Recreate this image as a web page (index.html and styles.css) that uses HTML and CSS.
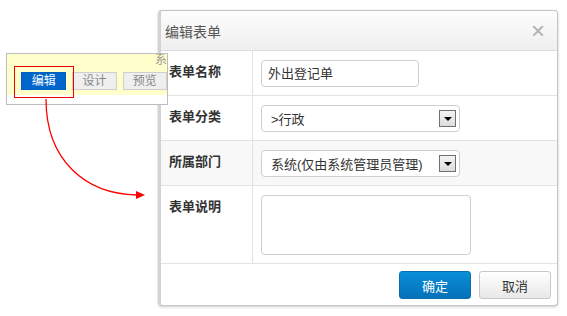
FILE: index.html
```html
<!DOCTYPE html>
<html lang="zh-CN">
<head>
  <meta charset="UTF-8" />
  <title>编辑表单</title>
  <link rel="stylesheet" href="styles.css">
</head>
<body>
  <div class="canvas">
    <div class="dialog">
      <div class="dialog-head">
        <span class="dialog-title">编辑表单</span>
        <span class="dialog-close">&times;</span>
      </div>
      <div class="form-table">
        <div class="row">
          <div class="label">表单名称</div>
          <div class="field"><div class="input">外出登记单</div></div>
        </div>
        <div class="row">
          <div class="label">表单分类</div>
          <div class="field">
            <div class="select"><span>&gt;行政</span><span class="arrow"></span></div>
          </div>
        </div>
        <div class="row shaded">
          <div class="label">所属部门</div>
          <div class="field">
            <div class="select"><span>系统(仅由系统管理员管理)</span><span class="arrow"></span></div>
          </div>
        </div>
        <div class="row tall">
          <div class="label">表单说明</div>
          <div class="field"><div class="textarea"></div></div>
        </div>
      </div>
      <div class="dialog-foot">
        <button class="btn btn-primary">确定</button>
        <button class="btn">取消</button>
      </div>
    </div>

    <div class="panel">
      <div class="panel-top">系</div>
      <div class="panel-tools">
        <span class="tool active">编辑</span>
        <span class="tool">设计</span>
        <span class="tool">预览</span>
      </div>
      <div class="panel-bottom"></div>
    </div>

    <div class="mark"></div>

    <svg class="pointer" width="567" height="316" viewBox="0 0 567 316">
      <path d="M46 99 C46 160 85 194 137 195" fill="none" stroke="#f00" stroke-width="1.3"/>
      <polygon points="136,191 145,195 136,199" fill="#f00"/>
    </svg>
  </div>
</body>
</html>
```

FILE: styles.css
```css
* {
  box-sizing: border-box;
  margin: 0;
  padding: 0;
}
body {
  background: #fff;
  font-family: "Liberation Sans", "Noto Sans CJK SC", sans-serif;
  font-size: 13px;
  color: #333;
}
.canvas {
  position: relative;
  width: 567px;
  height: 316px;
  overflow: hidden;
}

/* dialog window */
.dialog {
  position: absolute;
  left: 158px;
  top: 10px;
  width: 400px;
  height: 296px;
  background: #fff;
  border: 1px solid #c4c4c4;
  border-left: 3px solid #d2d2d2;
  border-radius: 4px;
  box-shadow: 0 1px 3px rgba(0,0,0,0.2);
  display: flex;
  flex-direction: column;
}
.dialog-head {
  height: 40px;
  display: flex;
  align-items: center;
  justify-content: space-between;
  padding: 0 12px 0 4px;
  background: linear-gradient(#fdfdfd, #efefef);
  border-bottom: 1px solid #dcdcdc;
  border-radius: 4px 4px 0 0;
}
.dialog-title {
  font-size: 14px;
  color: #555;
}
.dialog-close {
  font-size: 24px;
  color: #b0b0b0;
  line-height: 1;
}
.form-table {
  display: flex;
  flex-direction: column;
}
.row {
  display: flex;
  height: 45px;
  border-bottom: 1px solid #e2e2e2;
}
.row.shaded {
  background: #f8f8f8;
}
.row.tall {
  height: 78px;
}
.label {
  width: 92px;
  padding: 11px 0 0 8px;
  font-weight: bold;
  border-right: 1px solid #e2e2e2;
  line-height: 20px;
}
.field {
  flex: 1;
  padding: 9px 0 0 8px;
}
.input {
  width: 158px;
  height: 27px;
  border: 1px solid #cfcfcf;
  border-radius: 4px;
  background: #fff;
  padding: 0 6px;
  line-height: 25px;
}
.select {
  width: 199px;
  height: 27px;
  border: 1px solid #cfcfcf;
  border-radius: 4px;
  background: #fff;
  padding: 0 3px 0 9px;
  display: flex;
  align-items: center;
  justify-content: space-between;
}
.arrow {
  width: 17px;
  height: 17px;
  border: 1px solid #707070;
  background: linear-gradient(#f4f4f4, #dcdcdc);
  position: relative;
}
.arrow::after {
  content: "";
  position: absolute;
  left: 4px;
  top: 6px;
  border-left: 4px solid transparent;
  border-right: 4px solid transparent;
  border-top: 4px solid #000;
}
.textarea {
  width: 210px;
  height: 60px;
  border: 1px solid #cfcfcf;
  border-radius: 4px;
  background: #fff;
}
.dialog-foot {
  flex: 1;
  display: flex;
  justify-content: flex-end;
  align-items: flex-start;
  gap: 8px;
  padding: 7px 6px 0 0;
}
.btn {
  width: 72px;
  height: 28px;
  border: 1px solid #c8c8c8;
  border-radius: 3px;
  background: linear-gradient(#ffffff, #e8e8e8);
  font-family: inherit;
  font-size: 13px;
  color: #333;
}
.btn-primary {
  border-color: #0a6eb0;
  background: linear-gradient(#0a8fd8, #0571b8);
  color: #fff;
}

/* small floating panel */
.panel {
  position: absolute;
  left: 6px;
  top: 53px;
  width: 162px;
  height: 52px;
  border: 1px solid #bdbdbd;
  background: #fff;
  overflow: hidden;
}
.panel-top {
  height: 14px;
  background: #ffffcc;
  padding-left: 148px;
  white-space: nowrap;
  color: #999;
  font-size: 12px;
  line-height: 13px;
}
.panel-tools {
  background: #ffffcc;
  height: 27px;
  display: flex;
  gap: 6px;
  padding: 4px 0 0 14px;
}
.tool {
  width: 45px;
  height: 18px;
  border: 1px solid #cfcfcf;
  background: #efefef;
  color: #888;
  font-size: 12px;
  line-height: 16px;
  text-align: center;
}
.tool.active {
  width: 46px;
  border-color: #0060c0;
  background: #0066cc;
  color: #fff;
}
.mark {
  position: absolute;
  left: 14px;
  top: 66px;
  width: 60px;
  height: 32px;
  border: 1px solid #e00;
}
.pointer {
  position: absolute;
  left: 0;
  top: 0;
}
```
